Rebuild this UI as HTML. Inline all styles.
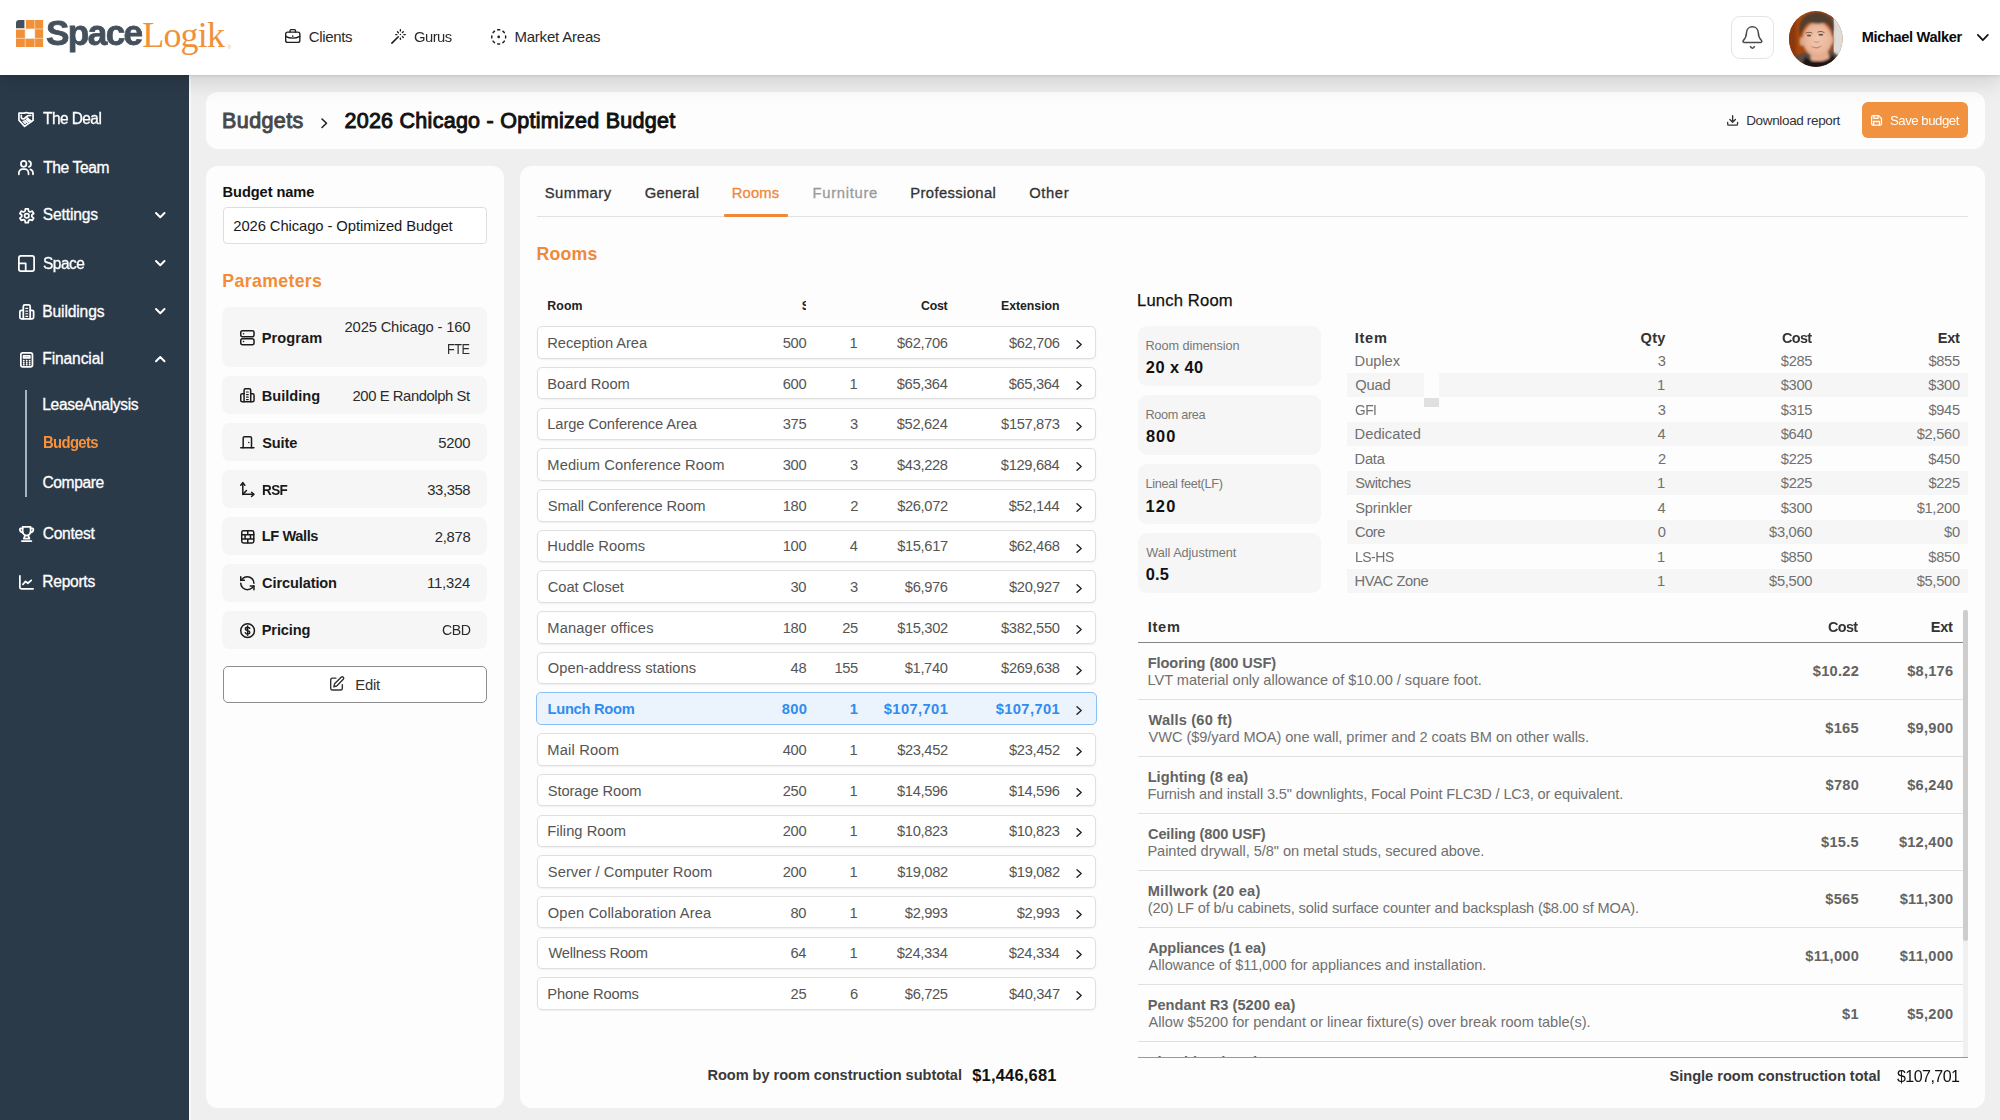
<!DOCTYPE html>
<html lang="en"><head><meta charset="utf-8"><title>SpaceLogik - Budgets</title>
<style>
*{box-sizing:border-box;margin:0;padding:0}
html,body{width:2000px;height:1120px;overflow:hidden}
body{background:#efefef;font-family:"Liberation Sans",sans-serif;color:#222;position:relative}
.abs{position:absolute}
.t{position:absolute;white-space:nowrap;line-height:1}
svg{position:absolute;overflow:visible}
.ic *{vector-effect:non-scaling-stroke}
#hdr{position:absolute;left:0;top:0;width:2000px;height:75px;background:#fff;box-shadow:0 1px 3px rgba(0,0,0,.1),0 8px 20px rgba(0,0,0,.12);z-index:5}
#side{position:absolute;left:0;top:75px;width:189px;height:1045px;background:#2b3a49;z-index:4}
.card{position:absolute;background:#fdfdfd;border-radius:12px}
.prm{position:absolute;left:222px;width:265px;background:#f6f6f6;border-radius:8px}
.row{position:absolute;left:536.8px;width:559.2px;height:32.4px;border:1px solid #dfdfdf;border-radius:5px;background:#fff;box-shadow:0 1px 2px rgba(0,0,0,.06)}
.row.sel{background:#ebf3fc;border:1.5px solid #8cbff7;left:536.3px;width:560.5px;height:32.7px;box-shadow:none}
.info{position:absolute;left:1138px;width:183px;height:60px;background:#f6f6f6;border-radius:9px}
</style></head>
<body>
<div id="hdr">
<svg style="left:16.3px;top:19.8px" width="27.1" height="27" viewBox="0 0 27.1 27" stroke="none"><rect x="0" y="8" width="27.1" height="19" fill="#f8c596"/><rect x="9" y="0" width="18.1" height="9" fill="#f8c596"/><path d="M3.2 0H8.65V8.4H0V3.2A3.2 3.2 0 0 1 3.2 0Z" fill="#44505c"/><g fill="#f0913a"><rect x="9.8" y="0" width="8.4" height="8.4"/><rect x="19.2" y="0" width="7.9" height="8.4"/><rect x="0" y="9.5" width="8.65" height="8.3"/><rect x="19.2" y="9.5" width="7.9" height="8.3"/><rect x="0" y="18.95" width="8.65" height="8.05"/><rect x="9.8" y="18.95" width="8.4" height="8.05"/><rect x="19.2" y="18.95" width="7.9" height="8.05"/></g><rect x="9.3" y="9" width="9.4" height="9.4" fill="#fff"/><rect x="8.65" y="0" width="1.15" height="9" fill="#fff"/><rect x="0" y="8.4" width="9" height="1.1" fill="#fff"/></svg>
<div class="t" style="left:45.85px;top:16px;font-size:35.5px;color:#44505c;letter-spacing:-1.6px;transform:scaleX(0.9893);transform-origin:0 0;font-weight:bold;-webkit-text-stroke:.8px #44505c;">Space</div>
<div class="t" style="left:142.32px;top:17px;font-size:36px;color:#f0913a;letter-spacing:-0.84px;font-family:'Liberation Serif',serif;">Logik</div>
<div class="t" style="left:227.5px;top:44.5px;font-size:5px;color:#e9b58c">&#174;</div>
<svg class="ic" style="left:284.9px;top:29px" width="15.5" height="14.1" viewBox="2.141 3.153 19.717 17.694" preserveAspectRatio="none" fill="none" stroke="#1e1e1e" stroke-width="1.35" stroke-linecap="round" stroke-linejoin="round"><rect x="3" y="7" width="18" height="13" rx="2.5"/><path d="M8.5 7V5.5A1.5 1.5 0 0 1 10 4h4a1.5 1.5 0 0 1 1.5 1.5V7"/><path d="M3 12.5c3 1.6 6 2.2 9 2.2s6-.6 9-2.2"/><path d="M12 12v.5"/></svg>
<div class="t" style="left:308.65px;top:29px;font-size:15px;color:#2a2a2a;letter-spacing:-0.32px;">Clients</div>
<svg style="left:391.1px;top:29px;color:#1e1e1e" width="15" height="15" viewBox="0 0 15 15" preserveAspectRatio="none" fill="none" stroke="#1e1e1e" stroke-width="1.4" stroke-linecap="round" stroke-linejoin="round"><path d="M.9 14.1 7.3 7.8" stroke-width="1.6"/><path d="M9.4 .7v1.2M9.4 9.1v1.2M4.7 5.6h1.2M12.9 5.6h1.4M6.5 2.8l.9.9M12.3 2.7l-.9.9M12.3 8.4l-.9-.8" stroke-width="1.4"/><circle cx="9.4" cy="5.6" r=".75" fill="currentColor" stroke="none"/></svg>
<div class="t" style="left:414.26px;top:29px;font-size:15px;color:#2a2a2a;letter-spacing:-0.54px;transform:scaleX(0.9882);transform-origin:0 0;">Gurus</div>
<svg style="left:490.7px;top:28.85px;color:#1e1e1e" width="15.4" height="15.8" viewBox="0 0 15.4 15.8" preserveAspectRatio="none" fill="none" stroke="#1e1e1e" stroke-width="1.45" stroke-linecap="round" stroke-linejoin="round"><ellipse cx="7.7" cy="7.9" rx="6.95" ry="7.15" stroke-width="1.45" stroke-dasharray="2.1 3.43" stroke-dashoffset="1.05" pathLength="44.24"/><circle cx="7.7" cy="7.95" r="1.35" fill="currentColor" stroke="none"/></svg>
<div class="t" style="left:514.4px;top:29px;font-size:15px;color:#2a2a2a;letter-spacing:-0.2px;">Market Areas</div>
<div class="abs" style="left:1731px;top:15.8px;width:42.8px;height:43px;border:1px solid #e4e4e4;border-radius:9px;background:#fff"></div>
<svg style="left:1742px;top:25.9px;color:#4a4a4a" width="21" height="23.4" viewBox="0 0 21 23.4" preserveAspectRatio="none" fill="none" stroke="#4a4a4a" stroke-width="1.5" stroke-linecap="round" stroke-linejoin="round"><path d="M10.4 .75C7 .75 4.6 3.3 4.5 6.8 4.4 10.5 4 12 1.3 14.6.6 15.3 1 16.4 2 16.4H18.8C19.8 16.4 20.2 15.3 19.5 14.6 16.8 12 16.4 10.5 16.3 6.8 16.2 3.3 13.8.75 10.4.75Z"/><path d="M8.5 20.6C9.3 22.8 11.6 22.8 12.4 20.6"/></svg>
<svg style="left:1789.3px;top:11px" width="53.6" height="56" viewBox="0 0 53.6 56" stroke="none"><defs><clipPath id="av"><ellipse cx="26.8" cy="28" rx="26.8" ry="28"/></clipPath><filter id="bl" x="-30%" y="-30%" width="160%" height="160%"><feGaussianBlur stdDeviation="1"/></filter><filter id="bs" x="-30%" y="-30%" width="160%" height="160%"><feGaussianBlur stdDeviation=".55"/></filter><radialGradient id="fc" cx=".52" cy=".5" r=".62"><stop offset="0" stop-color="#f3c8b0"/><stop offset=".65" stop-color="#eab699"/><stop offset="1" stop-color="#cf967a"/></radialGradient></defs><g clip-path="url(#av)"><rect width="54" height="56" fill="#a6470f"/><rect x="-2" y="0" width="9" height="56" fill="#8c390b" filter="url(#bl)"/><rect x="44" y="0" width="12" height="56" fill="#dedcd6"/><rect x="41" y="0" width="3.6" height="46" fill="#8b4c34" filter="url(#bs)"/><g filter="url(#bl)"><path d="M0 56 5 45 24 39 44 41 53 47 54 56Z" fill="#5b4a43"/><path d="M21 37H38L41 50H22Z" fill="#e6ae90"/><path d="M16.5 45.5C22 52.5 38 52 44 43.5L51 57H11Z" fill="#1a1414"/><ellipse cx="12.8" cy="30.5" rx="2.2" ry="4.6" fill="#dfa88c"/><ellipse cx="43.3" cy="29" rx="1.6" ry="4.2" fill="#d59a80"/><ellipse cx="28.3" cy="28.3" rx="15" ry="17.2" fill="url(#fc)"/><path d="M11.5 25C7.5 9 16 1.5 28 1.5 40 1.5 47 9 43.5 23 43 17 40 13 35.5 11.5 30 13.5 24 12.5 19.5 11.5 15.5 14 13 19 11.5 25Z" fill="#4f3d2f"/></g><g filter="url(#bs)"><path d="M16.5 22.3C18.5 21 21.5 21 23.5 22.2M28.5 21.3C30.5 20 33.5 20.2 35.5 21.8" stroke="#7a5b48" stroke-width="1" fill="none"/><ellipse cx="20" cy="24.5" rx="2.3" ry=".95" fill="#66564f"/><ellipse cx="31.8" cy="23.8" rx="2.5" ry=".95" fill="#66564f"/><path d="M25 30.3C26.5 31.6 29 31.6 30.5 30.3" stroke="#c48f74" stroke-width="1" fill="none"/><path d="M21.5 34.8C25 36.8 30.5 36.5 33.5 33.8 31.5 38.3 24.5 38.8 21.5 34.8Z" fill="#c58787"/></g></g></svg>
<div class="t" style="left:1861.65px;top:30px;font-size:14.6px;color:#0a0a0a;letter-spacing:-0.34px;font-weight:bold;">Michael Walker</div>
<svg class="ic" style="left:1976.9px;top:34.1px" width="11.7" height="7" viewBox="4.980 8.038 14.040 7.925" preserveAspectRatio="none" fill="none" stroke="#111" stroke-width="1.7" stroke-linecap="round" stroke-linejoin="round"><path d="m6 9 6 6 6-6"/></svg>
</div>
<div id="side"></div>
<div class="abs" style="left:189px;top:75px;width:2px;height:1045px;background:#f9f9f9;z-index:4"></div>
<div class="abs" style="left:0;top:0;width:189px;height:1120px;z-index:6">
<svg style="left:18.4px;top:112px;color:#fff" width="16" height="15.3" viewBox="0 0 16 15.3" preserveAspectRatio="none" fill="none" stroke="#fff" stroke-width="1.7" stroke-linecap="round" stroke-linejoin="round"><path d="M.95 1.2H5.8C7.4.35 9.2.35 10.8 1.2H15.05V8.4L6.6 14.4.95 8.2Z"/><path d="M3.3 3.4V5.1C3.4 7.1 5.7 7.5 6.9 6.1L8.1 4.8C9.1 3.7 10.5 3.4 12.7 3.4"/><path d="M8.9 5.7 13.5 9.5M5.3 9.4l1.9 1.9M7 8.4l2.2 2.2M8.8 7.4l2.3 2.3"/></svg>
<div class="t" style="left:43.19px;top:111px;font-size:15.6px;color:#fff;letter-spacing:-0.56px;transform:scaleX(0.9914);transform-origin:0 0;-webkit-text-stroke:.3px #fff;">The Deal</div>
<svg class="ic" style="left:18.4px;top:159.8px" width="15.85" height="15.2" viewBox="1.321 2.714 21.358 18.873" preserveAspectRatio="none" fill="none" stroke="#fff" stroke-width="1.75" stroke-linecap="round" stroke-linejoin="round"><circle cx="9" cy="7.5" r="3.7"/><path d="M2.5 20.5v-1.5a5 5 0 0 1 5-5h3a5 5 0 0 1 5 5v1.5"/><path d="M16 4a3.7 3.7 0 0 1 0 7.2"/><path d="M21.5 20.5v-1.5a5 5 0 0 0-3.5-4.7"/></svg>
<div class="t" style="left:43.19px;top:160px;font-size:15.6px;color:#fff;letter-spacing:-0.4px;-webkit-text-stroke:.3px #fff;">The Team</div>
<svg class="ic" style="left:18.6px;top:207.8px" width="15.6" height="15.6" viewBox="2.415 2.054 19.171 19.891" preserveAspectRatio="none" fill="none" stroke="#fff" stroke-width="1.75" stroke-linecap="round" stroke-linejoin="round"><path d="M10.28 3.17 L13.72 3.17 L14.26 6.12 L15.96 7.10 L18.79 6.10 L20.51 9.07 L18.22 11.01 L18.22 12.99 L20.51 14.93 L18.79 17.90 L15.96 16.90 L14.26 17.88 L13.72 20.83 L10.28 20.83 L9.74 17.88 L8.04 16.90 L5.21 17.90 L3.49 14.93 L5.78 12.99 L5.78 11.01 L3.49 9.07 L5.21 6.10 L8.04 7.10 L9.74 6.12Z"/><circle cx="12" cy="12" r="2.7"/></svg>
<div class="t" style="left:42.8px;top:207px;font-size:15.6px;color:#fff;letter-spacing:-0.16px;-webkit-text-stroke:.3px #fff;">Settings</div>
<svg style="left:154.75px;top:212px" width="10.5" height="6.25" viewBox="0 0 10.5 6.25" fill="none" stroke="#fff" stroke-width="2" stroke-linecap="round" stroke-linejoin="round"><path d="M1 1 5.25 5.25 9.5 1"/></svg>
<svg class="ic" style="left:17.75px;top:255px" width="17" height="16.9" viewBox="1.410 1.960 21.180 20.079" preserveAspectRatio="none" fill="none" stroke="#fff" stroke-width="1.75" stroke-linecap="round" stroke-linejoin="round"><rect x="2.5" y="3" width="19" height="18" rx="2.5"/><path d="M2.5 12h8.5v9"/></svg>
<div class="t" style="left:42.8px;top:256px;font-size:15.6px;color:#fff;letter-spacing:-0.56px;transform:scaleX(0.9962);transform-origin:0 0;-webkit-text-stroke:.3px #fff;">Space</div>
<svg style="left:154.75px;top:260.4px" width="10.5" height="6.25" viewBox="0 0 10.5 6.25" fill="none" stroke="#fff" stroke-width="2" stroke-linecap="round" stroke-linejoin="round"><path d="M1 1 5.25 5.25 9.5 1"/></svg>
<svg class="ic" style="left:18.5px;top:303.75px" width="15.5" height="15.65" viewBox="1.855 1.867 20.291 20.266" preserveAspectRatio="none" fill="none" stroke="#fff" stroke-width="1.75" stroke-linecap="round" stroke-linejoin="round"><path d="M7.5 21V5a2 2 0 0 1 2-2h5a2 2 0 0 1 2 2v16"/><path d="M7.5 10H5a2 2 0 0 0-2 2v7a2 2 0 0 0 2 2h14a2 2 0 0 0 2-2v-7a2 2 0 0 0-2-2h-2.5"/><path d="M10.8 7.5h2.4M10.8 11h2.4M10.8 14.5h2.4M10.8 18h2.4" stroke-width="1.2"/></svg>
<div class="t" style="left:42.25px;top:304px;font-size:15.6px;color:#fff;letter-spacing:-0.13px;-webkit-text-stroke:.3px #fff;">Buildings</div>
<svg style="left:154.75px;top:308.1px" width="10.5" height="6.25" viewBox="0 0 10.5 6.25" fill="none" stroke="#fff" stroke-width="2" stroke-linecap="round" stroke-linejoin="round"><path d="M1 1 5.25 5.25 9.5 1"/></svg>
<svg class="ic" style="left:19.75px;top:351.6px" width="13.35" height="15.65" viewBox="3.369 1.304 17.263 21.392" preserveAspectRatio="none" fill="none" stroke="#fff" stroke-width="1.75" stroke-linecap="round" stroke-linejoin="round"><rect x="4.5" y="2.5" width="15" height="19" rx="2.5"/><path d="M8 6.5h8v3H8z"/><path d="M8.2 13h.1M12 13h.1M15.8 13h.1M8.2 16h.1M12 16h.1M15.8 16h.1M8.2 18.6h.1M12 18.6h.1M15.8 18.6h.1"/></svg>
<div class="t" style="left:42.25px;top:351px;font-size:15.6px;color:#fff;letter-spacing:-0.12px;-webkit-text-stroke:.3px #fff;">Financial</div>
<svg style="left:154.75px;top:355.9px" width="10.5" height="6.25" viewBox="0 0 10.5 6.25" fill="none" stroke="#fff" stroke-width="2" stroke-linecap="round" stroke-linejoin="round"><path d="M1 5.25 5.25 1 9.5 5.25"/></svg>
<svg class="ic" style="left:18.75px;top:526px" width="15.25" height="15.9" viewBox="2.398 1.887 19.204 20.226" preserveAspectRatio="none" fill="none" stroke="#fff" stroke-width="1.75" stroke-linecap="round" stroke-linejoin="round"><path d="M7 3h10v6a5 5 0 0 1-10 0Z"/><path d="M7 5H4.5a1 1 0 0 0-1 1c0 2.5 1.5 4 3.8 4.2M17 5h2.5a1 1 0 0 1 1 1c0 2.5-1.5 4-3.8 4.2"/><path d="M10 14.2 8.5 18h7L14 14.2"/><path d="M6 21h12"/></svg>
<div class="t" style="left:42.72px;top:526px;font-size:15.6px;color:#fff;letter-spacing:-0.28px;-webkit-text-stroke:.3px #fff;">Contest</div>
<svg class="ic" style="left:18.75px;top:574.75px" width="15" height="14.65" viewBox="2.344 1.813 19.811 19.874" preserveAspectRatio="none" fill="none" stroke="#fff" stroke-width="1.75" stroke-linecap="round" stroke-linejoin="round"><path d="M3.5 3v15.5a2 2 0 0 0 2 2H21"/><path d="m7.5 14.5 3.5-4 3 2.5 4.5-4"/></svg>
<div class="t" style="left:42.25px;top:574px;font-size:15.6px;color:#fff;letter-spacing:-0.27px;-webkit-text-stroke:.3px #fff;">Reports</div>
<div class="abs" style="left:24.8px;top:389.7px;width:2.2px;height:107.5px;background:#aab2bb"></div>
<div class="t" style="left:42.25px;top:397px;font-size:15.6px;color:#fff;letter-spacing:-0.35px;-webkit-text-stroke:.3px #fff;">LeaseAnalysis</div>
<div class="t" style="left:42.53px;top:435px;font-size:15.6px;color:#f7923a;letter-spacing:-0.7px;transform:scaleX(0.9549);transform-origin:0 0;font-weight:bold;">Budgets</div>
<div class="t" style="left:42.52px;top:475px;font-size:15.6px;color:#fff;letter-spacing:-0.42px;-webkit-text-stroke:.3px #fff;">Compare</div>
</div>
<div class="card" style="left:205.5px;top:91.8px;width:1779.2px;height:57.1px"></div>
<div class="t" style="left:222.08px;top:111px;font-size:21.5px;color:#484848;letter-spacing:0.38px;-webkit-text-stroke:.95px #484848;">Budgets</div>
<svg style="left:320.5px;top:117.5px" width="6.5" height="10.5" viewBox="0 0 6.5 10.5" fill="none" stroke="#222" stroke-width="1.6" stroke-linecap="round" stroke-linejoin="round"><path d="M1 1 5.5 5.25 1 9.5"/></svg>
<div class="t" style="left:344.43px;top:111px;font-size:21.5px;color:#111;letter-spacing:0.27px;-webkit-text-stroke:.95px #111;">2026 Chicago - Optimized Budget</div>
<svg class="ic" style="left:1727px;top:115px" width="11.25" height="10.8" viewBox="2.909 2.857 18.182 18.286" preserveAspectRatio="none" fill="none" stroke="#333" stroke-width="1.35" stroke-linecap="round" stroke-linejoin="round"><path d="M12 4v11M7.5 10.5 12 15l4.5-4.5"/><path d="M4 15.5V18a2 2 0 0 0 2 2h12a2 2 0 0 0 2-2v-2.5"/></svg>
<div class="t" style="left:1746.22px;top:114px;font-size:13.5px;color:#333;letter-spacing:-0.35px;">Download report</div>
<div class="abs" style="left:1862px;top:102.2px;width:106px;height:36px;background:#f0923f;border-radius:6px"></div>
<svg class="ic" style="left:1870.7px;top:115px" width="11.1" height="10.8" viewBox="2.372 2.337 19.255 19.326" preserveAspectRatio="none" fill="none" stroke="#fff" stroke-width="1.3" stroke-linecap="round" stroke-linejoin="round"><path d="M6 3.5h9.5L20.5 8.5V18a2.5 2.5 0 0 1-2.5 2.5H6A2.5 2.5 0 0 1 3.5 18V6A2.5 2.5 0 0 1 6 3.5Z"/><path d="M7.5 3.5v5h7v-5M7 20.5v-6.5h10v6.5"/></svg>
<div class="t" style="left:1890.21px;top:114px;font-size:13.5px;color:#fff;letter-spacing:-0.49px;transform:scaleX(0.9777);transform-origin:0 0;">Save budget</div>
<div class="card" style="left:206px;top:165.6px;width:297.6px;height:942.8px"></div>
<div class="t" style="left:222.55px;top:185px;font-size:14.6px;color:#111;letter-spacing:-0.06px;font-weight:bold;">Budget name</div>
<div class="abs" style="left:222.5px;top:206.5px;width:264px;height:37px;border:1px solid #dedede;border-radius:4px;background:#fff"></div>
<div class="t" style="left:233.26px;top:219px;font-size:14.8px;color:#1a1a1a;letter-spacing:-0.09px;">2026 Chicago - Optimized Budget</div>
<div class="t" style="left:222.35px;top:273px;font-size:17.7px;color:#f28c38;letter-spacing:0.36px;font-weight:bold;">Parameters</div>
<div class="prm" style="top:307.3px;height:59.9px"></div>
<svg class="ic" style="left:240px;top:330px" width="14.8" height="15.4" viewBox="1.429 2.556 21.143 19.388" preserveAspectRatio="none" fill="none" stroke="#1c1c1c" stroke-width="1.5" stroke-linecap="round" stroke-linejoin="round"><rect x="2.5" y="3.5" width="19" height="7.5" rx="2.5"/><rect x="2.5" y="13.5" width="19" height="7.5" rx="2.5"/><path d="M6.5 7.2h.1M6.5 17.2h.1"/></svg>
<div class="t" style="left:261.75px;top:331px;font-size:14.6px;color:#1a1a1a;letter-spacing:0.06px;font-weight:bold;">Program</div>
<div class="prm" style="top:376px;height:38.4px"></div>
<svg class="ic" style="left:240px;top:388.2px" width="14.8" height="14.5" viewBox="1.985 1.962 20.030 20.077" preserveAspectRatio="none" fill="none" stroke="#1c1c1c" stroke-width="1.5" stroke-linecap="round" stroke-linejoin="round"><path d="M7.5 21V5a2 2 0 0 1 2-2h5a2 2 0 0 1 2 2v16"/><path d="M7.5 10H5a2 2 0 0 0-2 2v7a2 2 0 0 0 2 2h14a2 2 0 0 0 2-2v-7a2 2 0 0 0-2-2h-2.5"/><path d="M10.8 7.5h2.4M10.8 11h2.4M10.8 14.5h2.4M10.8 18h2.4" stroke-width="1.2"/></svg>
<div class="t" style="left:261.75px;top:389px;font-size:14.6px;color:#1a1a1a;font-weight:bold;">Building</div>
<div class="t" style="left:352.56px;top:389px;font-size:14.8px;color:#2b2b2b;letter-spacing:-0.42px;">200 E Randolph St</div>
<div class="prm" style="top:423.3px;height:37.9px"></div>
<svg class="ic" style="left:240.1px;top:436.3px" width="14.7" height="12.45" viewBox="1.420 2.336 21.159 19.329" preserveAspectRatio="none" fill="none" stroke="#1c1c1c" stroke-width="1.5" stroke-linecap="round" stroke-linejoin="round"><path d="M2.5 20.5h19"/><path d="M6 20.5V5.5a2 2 0 0 1 2-2h8a2 2 0 0 1 2 2v15"/><path d="M14 12.5v.1"/></svg>
<div class="t" style="left:262.26px;top:436px;font-size:14.6px;color:#1a1a1a;letter-spacing:-0.16px;font-weight:bold;">Suite</div>
<div class="t" style="left:438.31px;top:436px;font-size:14.8px;color:#2b2b2b;letter-spacing:-0.24px;">5200</div>
<div class="prm" style="top:470.2px;height:38.1px"></div>
<svg class="ic" style="left:239.9px;top:481.8px" width="14.5" height="15.3" viewBox="0.904 1.967 21.192 21.065" preserveAspectRatio="none" fill="none" stroke="#1c1c1c" stroke-width="1.5" stroke-linecap="round" stroke-linejoin="round"><path d="M5 3v16h16"/><path d="m5 19 5.3-5.3"/><path d="m2 6.3 3-3.3 3 3.3"/><path d="m17.8 16 3.2 3-3.2 3"/></svg>
<div class="t" style="left:261.82px;top:483px;font-size:14.6px;color:#1a1a1a;letter-spacing:-0.66px;transform:scaleX(0.9271);transform-origin:0 0;font-weight:bold;">RSF</div>
<div class="t" style="left:427.28px;top:483px;font-size:14.8px;color:#2b2b2b;letter-spacing:-0.4px;">33,358</div>
<div class="prm" style="top:517.4px;height:37.5px"></div>
<svg class="ic" style="left:240.7px;top:529.6px" width="13.55" height="13.8" viewBox="1.880 1.902 20.241 20.195" preserveAspectRatio="none" fill="none" stroke="#1c1c1c" stroke-width="1.5" stroke-linecap="round" stroke-linejoin="round"><rect x="3" y="3" width="18" height="18" rx="2.5"/><path d="M3 9h18M3 15h18M12 3v6M8 9v6M16 9v6M12 15v6"/></svg>
<div class="t" style="left:261.75px;top:529px;font-size:14.6px;color:#1a1a1a;letter-spacing:-0.39px;font-weight:bold;">LF Walls</div>
<div class="t" style="left:434.86px;top:530px;font-size:14.8px;color:#2b2b2b;letter-spacing:-0.32px;">2,878</div>
<div class="prm" style="top:564.2px;height:37.6px"></div>
<svg class="ic" style="left:240px;top:575.8px" width="14.7" height="14.4" viewBox="1.977 1.953 20.045 20.093" preserveAspectRatio="none" fill="none" stroke="#1c1c1c" stroke-width="1.5" stroke-linecap="round" stroke-linejoin="round"><path d="M21 12a9 9 0 0 0-9-9 9.75 9.75 0 0 0-6.74 2.74L3 8"/><path d="M3 3v5h5"/><path d="M3 12a9 9 0 0 0 9 9 9.75 9.75 0 0 0 6.74-2.74L21 16"/><path d="M16 16h5v5"/></svg>
<div class="t" style="left:262.12px;top:576px;font-size:14.6px;color:#1a1a1a;letter-spacing:-0.13px;font-weight:bold;">Circulation</div>
<div class="t" style="left:426.99px;top:576px;font-size:14.8px;color:#2b2b2b;letter-spacing:-0.16px;">11,324</div>
<div class="prm" style="top:611.2px;height:37.7px"></div>
<svg class="ic" style="left:239.6px;top:623.1px" width="15.2" height="15.3" viewBox="1.460 1.467 21.080 21.065" preserveAspectRatio="none" fill="none" stroke="#1c1c1c" stroke-width="1.5" stroke-linecap="round" stroke-linejoin="round"><circle cx="12" cy="12" r="9.5"/><path d="M15 8.8c-.5-1-1.6-1.5-3-1.5-1.8 0-3 .9-3 2.3 0 3 6 1.6 6 4.7 0 1.4-1.3 2.4-3 2.4-1.6 0-2.7-.7-3.2-1.8M12 5.5v13"/></svg>
<div class="t" style="left:261.75px;top:623px;font-size:14.6px;color:#1a1a1a;letter-spacing:-0.12px;font-weight:bold;">Pricing</div>
<div class="t" style="left:441.79px;top:623px;font-size:14.8px;color:#2b2b2b;letter-spacing:-0.53px;transform:scaleX(0.9563);transform-origin:0 0;">CBD</div>
<div class="t" style="left:344.56px;top:320px;font-size:14.8px;color:#2b2b2b;letter-spacing:-0.19px;">2025 Chicago - 160</div>
<div class="t" style="left:447.48px;top:342px;font-size:14.8px;color:#2b2b2b;letter-spacing:-0.53px;transform:scaleX(0.8581);transform-origin:0 0;">FTE</div>
<div class="abs" style="left:222.5px;top:666px;width:264px;height:37px;border:1px solid #8d8d8d;border-radius:5px;background:#fff"></div>
<svg class="ic" style="left:330.1px;top:676.3px" width="14.4" height="14.7" viewBox="2.508 1.110 20.404 20.359" preserveAspectRatio="none" fill="none" stroke="#333" stroke-width="1.4" stroke-linecap="round" stroke-linejoin="round"><path d="M11 4H6a2.5 2.5 0 0 0-2.5 2.5v11.5A2.5 2.5 0 0 0 6 20.5h11.5a2.5 2.5 0 0 0 2.5-2.5v-5"/><path d="M18.3 2.7a2.1 2.1 0 0 1 3 3L12 15l-4 1 1-4Z"/></svg>
<div class="t" style="left:355.22px;top:678px;font-size:14.8px;color:#333;letter-spacing:-0.2px;">Edit</div>
<div class="card" style="left:519.8px;top:165.6px;width:1464.9px;height:942.8px"></div>
<div class="t" style="left:544.73px;top:186px;font-size:14.8px;color:#333;letter-spacing:0.52px;-webkit-text-stroke:.3px currentColor;">Summary</div>
<div class="t" style="left:644.66px;top:186px;font-size:14.8px;color:#333;letter-spacing:0.28px;-webkit-text-stroke:.3px currentColor;">General</div>
<div class="t" style="left:731.82px;top:186px;font-size:14.8px;color:#f0883a;letter-spacing:0.12px;-webkit-text-stroke:.3px currentColor;">Rooms</div>
<div class="t" style="left:812.52px;top:186px;font-size:14.8px;color:#9a9a9a;letter-spacing:0.7px;-webkit-text-stroke:.3px currentColor;">Furniture</div>
<div class="t" style="left:910.22px;top:186px;font-size:14.8px;color:#333;letter-spacing:0.38px;-webkit-text-stroke:.3px currentColor;">Professional</div>
<div class="t" style="left:1029.13px;top:186px;font-size:14.8px;color:#333;letter-spacing:0.63px;-webkit-text-stroke:.3px currentColor;">Other</div>
<div class="abs" style="left:537px;top:216.3px;width:1431px;height:1.2px;background:#e2e2e2"></div>
<div class="abs" style="left:723.8px;top:214.2px;width:64.2px;height:2.7px;background:#f0883a;border-radius:1px"></div>
<div class="t" style="left:536.45px;top:246px;font-size:17.7px;color:#f0883a;letter-spacing:0.21px;font-weight:bold;">Rooms</div>
<div class="t" style="left:547.2px;top:300px;font-size:12.3px;color:#222;letter-spacing:0.16px;font-weight:bold;">Room</div>
<div class="abs" style="left:790px;top:296px;width:16.2px;height:20px;overflow:hidden"><div class="t" style="left:11.7px;top:3.9px;font-size:12.3px;font-weight:bold;color:#222">SF</div></div>
<div class="t" style="left:921.01px;top:300px;font-size:12.3px;color:#222;letter-spacing:-0.23px;font-weight:bold;">Cost</div>
<div class="t" style="left:1001px;top:300px;font-size:12.3px;color:#222;letter-spacing:-0.03px;font-weight:bold;">Extension</div>
<div class="row" style="top:326.4px"></div>
<div class="t" style="left:547.32px;top:336px;font-size:14.7px;color:#555;letter-spacing:-0.05px;">Reception Area</div>
<div class="t" style="left:782.72px;top:336px;font-size:14.7px;color:#555;letter-spacing:-0.34px;">500</div>
<div class="t" style="left:849.4px;top:336px;font-size:14.7px;color:#555;letter-spacing:-0.34px;">1</div>
<div class="t" style="left:896.99px;top:336px;font-size:14.7px;color:#555;letter-spacing:-0.34px;">$62,706</div>
<div class="t" style="left:1008.89px;top:336px;font-size:14.7px;color:#555;letter-spacing:-0.34px;">$62,706</div>
<svg style="left:1075.6px;top:340.2px" width="6.2" height="9" viewBox="0 0 6.2 9" fill="none" stroke="#222" stroke-width="1.4" stroke-linecap="round" stroke-linejoin="round"><path d="M1 .8 5.2 4.5 1 8.2"/></svg>
<div class="row" style="top:367.08px"></div>
<div class="t" style="left:547.32px;top:377px;font-size:14.7px;color:#555;letter-spacing:0.01px;">Board Room</div>
<div class="t" style="left:782.72px;top:377px;font-size:14.7px;color:#555;letter-spacing:-0.34px;">600</div>
<div class="t" style="left:849.4px;top:377px;font-size:14.7px;color:#555;letter-spacing:-0.34px;">1</div>
<div class="t" style="left:896.77px;top:377px;font-size:14.7px;color:#555;letter-spacing:-0.34px;">$65,364</div>
<div class="t" style="left:1008.67px;top:377px;font-size:14.7px;color:#555;letter-spacing:-0.34px;">$65,364</div>
<svg style="left:1075.6px;top:380.88px" width="6.2" height="9" viewBox="0 0 6.2 9" fill="none" stroke="#222" stroke-width="1.4" stroke-linecap="round" stroke-linejoin="round"><path d="M1 .8 5.2 4.5 1 8.2"/></svg>
<div class="row" style="top:407.76px"></div>
<div class="t" style="left:547.32px;top:417px;font-size:14.7px;color:#555;letter-spacing:-0.11px;">Large Conference Area</div>
<div class="t" style="left:782.79px;top:417px;font-size:14.7px;color:#555;letter-spacing:-0.34px;">375</div>
<div class="t" style="left:850.03px;top:417px;font-size:14.7px;color:#555;letter-spacing:-0.34px;">3</div>
<div class="t" style="left:896.77px;top:417px;font-size:14.7px;color:#555;letter-spacing:-0.34px;">$52,624</div>
<div class="t" style="left:1001.07px;top:417px;font-size:14.7px;color:#555;letter-spacing:-0.34px;">$157,873</div>
<svg style="left:1075.6px;top:421.56px" width="6.2" height="9" viewBox="0 0 6.2 9" fill="none" stroke="#222" stroke-width="1.4" stroke-linecap="round" stroke-linejoin="round"><path d="M1 .8 5.2 4.5 1 8.2"/></svg>
<div class="row" style="top:448.44px"></div>
<div class="t" style="left:547.32px;top:458px;font-size:14.7px;color:#555;letter-spacing:0.08px;">Medium Conference Room</div>
<div class="t" style="left:782.72px;top:458px;font-size:14.7px;color:#555;letter-spacing:-0.34px;">300</div>
<div class="t" style="left:850.03px;top:458px;font-size:14.7px;color:#555;letter-spacing:-0.34px;">3</div>
<div class="t" style="left:896.99px;top:458px;font-size:14.7px;color:#555;letter-spacing:-0.34px;">$43,228</div>
<div class="t" style="left:1000.85px;top:458px;font-size:14.7px;color:#555;letter-spacing:-0.34px;">$129,684</div>
<svg style="left:1075.6px;top:462.24px" width="6.2" height="9" viewBox="0 0 6.2 9" fill="none" stroke="#222" stroke-width="1.4" stroke-linecap="round" stroke-linejoin="round"><path d="M1 .8 5.2 4.5 1 8.2"/></svg>
<div class="row" style="top:489.12px"></div>
<div class="t" style="left:547.84px;top:499px;font-size:14.7px;color:#555;letter-spacing:-0.12px;">Small Conference Room</div>
<div class="t" style="left:782.72px;top:499px;font-size:14.7px;color:#555;letter-spacing:-0.34px;">180</div>
<div class="t" style="left:850.18px;top:499px;font-size:14.7px;color:#555;letter-spacing:-0.34px;">2</div>
<div class="t" style="left:897.13px;top:499px;font-size:14.7px;color:#555;letter-spacing:-0.34px;">$26,072</div>
<div class="t" style="left:1008.67px;top:499px;font-size:14.7px;color:#555;letter-spacing:-0.34px;">$52,144</div>
<svg style="left:1075.6px;top:502.92px" width="6.2" height="9" viewBox="0 0 6.2 9" fill="none" stroke="#222" stroke-width="1.4" stroke-linecap="round" stroke-linejoin="round"><path d="M1 .8 5.2 4.5 1 8.2"/></svg>
<div class="row" style="top:529.8px"></div>
<div class="t" style="left:547.32px;top:539px;font-size:14.7px;color:#555;letter-spacing:0.06px;">Huddle Rooms</div>
<div class="t" style="left:782.72px;top:539px;font-size:14.7px;color:#555;letter-spacing:-0.34px;">100</div>
<div class="t" style="left:849.81px;top:539px;font-size:14.7px;color:#555;letter-spacing:-0.34px;">4</div>
<div class="t" style="left:897.13px;top:539px;font-size:14.7px;color:#555;letter-spacing:-0.34px;">$15,617</div>
<div class="t" style="left:1008.89px;top:539px;font-size:14.7px;color:#555;letter-spacing:-0.34px;">$62,468</div>
<svg style="left:1075.6px;top:543.6px" width="6.2" height="9" viewBox="0 0 6.2 9" fill="none" stroke="#222" stroke-width="1.4" stroke-linecap="round" stroke-linejoin="round"><path d="M1 .8 5.2 4.5 1 8.2"/></svg>
<div class="row" style="top:570.48px"></div>
<div class="t" style="left:547.76px;top:580px;font-size:14.7px;color:#555;letter-spacing:-0.06px;">Coat Closet</div>
<div class="t" style="left:790.54px;top:580px;font-size:14.7px;color:#555;letter-spacing:-0.34px;">30</div>
<div class="t" style="left:850.03px;top:580px;font-size:14.7px;color:#555;letter-spacing:-0.34px;">3</div>
<div class="t" style="left:904.81px;top:580px;font-size:14.7px;color:#555;letter-spacing:-0.34px;">$6,976</div>
<div class="t" style="left:1009.03px;top:580px;font-size:14.7px;color:#555;letter-spacing:-0.34px;">$20,927</div>
<svg style="left:1075.6px;top:584.28px" width="6.2" height="9" viewBox="0 0 6.2 9" fill="none" stroke="#222" stroke-width="1.4" stroke-linecap="round" stroke-linejoin="round"><path d="M1 .8 5.2 4.5 1 8.2"/></svg>
<div class="row" style="top:611.16px"></div>
<div class="t" style="left:547.32px;top:621px;font-size:14.7px;color:#555;letter-spacing:0.14px;">Manager offices</div>
<div class="t" style="left:782.72px;top:621px;font-size:14.7px;color:#555;letter-spacing:-0.34px;">180</div>
<div class="t" style="left:842.21px;top:621px;font-size:14.7px;color:#555;letter-spacing:-0.34px;">25</div>
<div class="t" style="left:897.13px;top:621px;font-size:14.7px;color:#555;letter-spacing:-0.34px;">$15,302</div>
<div class="t" style="left:1001px;top:621px;font-size:14.7px;color:#555;letter-spacing:-0.34px;">$382,550</div>
<svg style="left:1075.6px;top:624.96px" width="6.2" height="9" viewBox="0 0 6.2 9" fill="none" stroke="#222" stroke-width="1.4" stroke-linecap="round" stroke-linejoin="round"><path d="M1 .8 5.2 4.5 1 8.2"/></svg>
<div class="row" style="top:651.84px"></div>
<div class="t" style="left:547.84px;top:661px;font-size:14.7px;color:#555;letter-spacing:0.02px;">Open-address stations</div>
<div class="t" style="left:790.61px;top:661px;font-size:14.7px;color:#555;letter-spacing:-0.34px;">48</div>
<div class="t" style="left:834.39px;top:661px;font-size:14.7px;color:#555;letter-spacing:-0.34px;">155</div>
<div class="t" style="left:904.73px;top:661px;font-size:14.7px;color:#555;letter-spacing:-0.34px;">$1,740</div>
<div class="t" style="left:1001.07px;top:661px;font-size:14.7px;color:#555;letter-spacing:-0.34px;">$269,638</div>
<svg style="left:1075.6px;top:665.64px" width="6.2" height="9" viewBox="0 0 6.2 9" fill="none" stroke="#222" stroke-width="1.4" stroke-linecap="round" stroke-linejoin="round"><path d="M1 .8 5.2 4.5 1 8.2"/></svg>
<div class="row sel" style="top:692.07px"></div>
<div class="t" style="left:547.54px;top:702px;font-size:14.7px;color:#2f8cf0;letter-spacing:-0.28px;font-weight:bold;">Lunch Room</div>
<div class="t" style="left:781.71px;top:702px;font-size:14.7px;color:#2f8cf0;letter-spacing:0.4px;font-weight:bold;">800</div>
<div class="t" style="left:849.71px;top:702px;font-size:14.7px;color:#2f8cf0;letter-spacing:0.4px;font-weight:bold;">1</div>
<div class="t" style="left:883.77px;top:702px;font-size:14.7px;color:#2f8cf0;letter-spacing:0.4px;font-weight:bold;">$107,701</div>
<div class="t" style="left:995.67px;top:702px;font-size:14.7px;color:#2f8cf0;letter-spacing:0.4px;font-weight:bold;">$107,701</div>
<svg style="left:1075.6px;top:706.32px" width="6.2" height="9" viewBox="0 0 6.2 9" fill="none" stroke="#222" stroke-width="1.4" stroke-linecap="round" stroke-linejoin="round"><path d="M1 .8 5.2 4.5 1 8.2"/></svg>
<div class="row" style="top:733.2px"></div>
<div class="t" style="left:547.32px;top:743px;font-size:14.7px;color:#555;letter-spacing:0.18px;">Mail Room</div>
<div class="t" style="left:782.72px;top:743px;font-size:14.7px;color:#555;letter-spacing:-0.34px;">400</div>
<div class="t" style="left:849.4px;top:743px;font-size:14.7px;color:#555;letter-spacing:-0.34px;">1</div>
<div class="t" style="left:897.13px;top:743px;font-size:14.7px;color:#555;letter-spacing:-0.34px;">$23,452</div>
<div class="t" style="left:1009.03px;top:743px;font-size:14.7px;color:#555;letter-spacing:-0.34px;">$23,452</div>
<svg style="left:1075.6px;top:747px" width="6.2" height="9" viewBox="0 0 6.2 9" fill="none" stroke="#222" stroke-width="1.4" stroke-linecap="round" stroke-linejoin="round"><path d="M1 .8 5.2 4.5 1 8.2"/></svg>
<div class="row" style="top:773.88px"></div>
<div class="t" style="left:547.84px;top:784px;font-size:14.7px;color:#555;letter-spacing:-0.1px;">Storage Room</div>
<div class="t" style="left:782.72px;top:784px;font-size:14.7px;color:#555;letter-spacing:-0.34px;">250</div>
<div class="t" style="left:849.4px;top:784px;font-size:14.7px;color:#555;letter-spacing:-0.34px;">1</div>
<div class="t" style="left:896.99px;top:784px;font-size:14.7px;color:#555;letter-spacing:-0.34px;">$14,596</div>
<div class="t" style="left:1008.89px;top:784px;font-size:14.7px;color:#555;letter-spacing:-0.34px;">$14,596</div>
<svg style="left:1075.6px;top:787.68px" width="6.2" height="9" viewBox="0 0 6.2 9" fill="none" stroke="#222" stroke-width="1.4" stroke-linecap="round" stroke-linejoin="round"><path d="M1 .8 5.2 4.5 1 8.2"/></svg>
<div class="row" style="top:814.56px"></div>
<div class="t" style="left:547.32px;top:824px;font-size:14.7px;color:#555;letter-spacing:0.02px;">Filing Room</div>
<div class="t" style="left:782.72px;top:824px;font-size:14.7px;color:#555;letter-spacing:-0.34px;">200</div>
<div class="t" style="left:849.4px;top:824px;font-size:14.7px;color:#555;letter-spacing:-0.34px;">1</div>
<div class="t" style="left:896.99px;top:824px;font-size:14.7px;color:#555;letter-spacing:-0.34px;">$10,823</div>
<div class="t" style="left:1008.89px;top:824px;font-size:14.7px;color:#555;letter-spacing:-0.34px;">$10,823</div>
<svg style="left:1075.6px;top:828.36px" width="6.2" height="9" viewBox="0 0 6.2 9" fill="none" stroke="#222" stroke-width="1.4" stroke-linecap="round" stroke-linejoin="round"><path d="M1 .8 5.2 4.5 1 8.2"/></svg>
<div class="row" style="top:855.24px"></div>
<div class="t" style="left:547.84px;top:865px;font-size:14.7px;color:#555;letter-spacing:0.05px;">Server / Computer Room</div>
<div class="t" style="left:782.72px;top:865px;font-size:14.7px;color:#555;letter-spacing:-0.34px;">200</div>
<div class="t" style="left:849.4px;top:865px;font-size:14.7px;color:#555;letter-spacing:-0.34px;">1</div>
<div class="t" style="left:897.13px;top:865px;font-size:14.7px;color:#555;letter-spacing:-0.34px;">$19,082</div>
<div class="t" style="left:1009.03px;top:865px;font-size:14.7px;color:#555;letter-spacing:-0.34px;">$19,082</div>
<svg style="left:1075.6px;top:869.04px" width="6.2" height="9" viewBox="0 0 6.2 9" fill="none" stroke="#222" stroke-width="1.4" stroke-linecap="round" stroke-linejoin="round"><path d="M1 .8 5.2 4.5 1 8.2"/></svg>
<div class="row" style="top:895.92px"></div>
<div class="t" style="left:547.84px;top:906px;font-size:14.7px;color:#555;letter-spacing:0.11px;">Open Collaboration Area</div>
<div class="t" style="left:790.54px;top:906px;font-size:14.7px;color:#555;letter-spacing:-0.34px;">80</div>
<div class="t" style="left:849.4px;top:906px;font-size:14.7px;color:#555;letter-spacing:-0.34px;">1</div>
<div class="t" style="left:904.81px;top:906px;font-size:14.7px;color:#555;letter-spacing:-0.34px;">$2,993</div>
<div class="t" style="left:1016.71px;top:906px;font-size:14.7px;color:#555;letter-spacing:-0.34px;">$2,993</div>
<svg style="left:1075.6px;top:909.72px" width="6.2" height="9" viewBox="0 0 6.2 9" fill="none" stroke="#222" stroke-width="1.4" stroke-linecap="round" stroke-linejoin="round"><path d="M1 .8 5.2 4.5 1 8.2"/></svg>
<div class="row" style="top:936.6px"></div>
<div class="t" style="left:548.43px;top:946px;font-size:14.7px;color:#555;letter-spacing:-0.25px;">Wellness Room</div>
<div class="t" style="left:790.39px;top:946px;font-size:14.7px;color:#555;letter-spacing:-0.34px;">64</div>
<div class="t" style="left:849.4px;top:946px;font-size:14.7px;color:#555;letter-spacing:-0.34px;">1</div>
<div class="t" style="left:896.77px;top:946px;font-size:14.7px;color:#555;letter-spacing:-0.34px;">$24,334</div>
<div class="t" style="left:1008.67px;top:946px;font-size:14.7px;color:#555;letter-spacing:-0.34px;">$24,334</div>
<svg style="left:1075.6px;top:950.4px" width="6.2" height="9" viewBox="0 0 6.2 9" fill="none" stroke="#222" stroke-width="1.4" stroke-linecap="round" stroke-linejoin="round"><path d="M1 .8 5.2 4.5 1 8.2"/></svg>
<div class="row" style="top:977.28px"></div>
<div class="t" style="left:547.32px;top:987px;font-size:14.7px;color:#555;letter-spacing:-0.15px;">Phone Rooms</div>
<div class="t" style="left:790.61px;top:987px;font-size:14.7px;color:#555;letter-spacing:-0.34px;">25</div>
<div class="t" style="left:850.03px;top:987px;font-size:14.7px;color:#555;letter-spacing:-0.34px;">6</div>
<div class="t" style="left:904.81px;top:987px;font-size:14.7px;color:#555;letter-spacing:-0.34px;">$6,725</div>
<div class="t" style="left:1009.03px;top:987px;font-size:14.7px;color:#555;letter-spacing:-0.34px;">$40,347</div>
<svg style="left:1075.6px;top:991.08px" width="6.2" height="9" viewBox="0 0 6.2 9" fill="none" stroke="#222" stroke-width="1.4" stroke-linecap="round" stroke-linejoin="round"><path d="M1 .8 5.2 4.5 1 8.2"/></svg>
<div class="t" style="left:707.45px;top:1068px;font-size:14.6px;color:#3a3a3a;letter-spacing:-0.05px;font-weight:bold;">Room by room construction subtotal</div>
<div class="t" style="left:972.15px;top:1067px;font-size:16.5px;color:#111;letter-spacing:0.2px;font-weight:bold;">$1,446,681</div>
<div class="t" style="left:1137.07px;top:293px;font-size:16.6px;color:#111;letter-spacing:0.16px;-webkit-text-stroke:.25px #111;">Lunch Room</div>
<div class="info" style="top:326px;height:60px"></div>
<div class="t" style="left:1145.38px;top:340px;font-size:12.7px;color:#777;letter-spacing:-0.07px;">Room dimension</div>
<div class="t" style="left:1145.83px;top:359px;font-size:16.4px;color:#111;letter-spacing:0.44px;font-weight:bold;">20 x 40</div>
<div class="info" style="top:395px;height:60px"></div>
<div class="t" style="left:1145.38px;top:409px;font-size:12.7px;color:#777;letter-spacing:-0.32px;">Room area</div>
<div class="t" style="left:1145.91px;top:428px;font-size:16.4px;color:#111;letter-spacing:1.07px;font-weight:bold;">800</div>
<div class="info" style="top:464.3px;height:59.3px"></div>
<div class="t" style="left:1145.38px;top:478px;font-size:12.7px;color:#777;letter-spacing:-0.3px;">Lineal feet(LF)</div>
<div class="t" style="left:1145.42px;top:498px;font-size:16.4px;color:#111;letter-spacing:1.32px;font-weight:bold;">120</div>
<div class="info" style="top:533px;height:59.8px"></div>
<div class="t" style="left:1146.34px;top:547px;font-size:12.7px;color:#777;letter-spacing:-0.04px;">Wall Adjustment</div>
<div class="t" style="left:1145.74px;top:566px;font-size:16.4px;color:#111;letter-spacing:0.23px;font-weight:bold;">0.5</div>
<div class="t" style="left:1354.65px;top:331px;font-size:14.6px;color:#333;letter-spacing:0.74px;font-weight:bold;">Item</div>
<div class="t" style="left:1640.42px;top:331px;font-size:14.6px;color:#333;letter-spacing:0.37px;font-weight:bold;">Qty</div>
<div class="t" style="left:1782.02px;top:331px;font-size:14.6px;color:#333;letter-spacing:-0.66px;transform:scaleX(0.9895);transform-origin:0 0;font-weight:bold;">Cost</div>
<div class="t" style="left:1937.75px;top:331px;font-size:14.6px;color:#333;letter-spacing:-0.35px;font-weight:bold;">Ext</div>
<div class="t" style="left:1354.62px;top:354px;font-size:14.7px;color:#707070;letter-spacing:-0.05px;">Duplex</div>
<div class="t" style="left:1657.73px;top:354px;font-size:14.7px;color:#707070;letter-spacing:-0.3px;">3</div>
<div class="t" style="left:1780.78px;top:354px;font-size:14.7px;color:#707070;letter-spacing:-0.3px;">$285</div>
<div class="t" style="left:1928.38px;top:354px;font-size:14.7px;color:#707070;letter-spacing:-0.3px;">$855</div>
<div class="abs" style="left:1347px;top:373px;width:621px;height:24.4px;background:#f6f6f6"></div>
<div class="t" style="left:1355.14px;top:378px;font-size:14.7px;color:#707070;letter-spacing:-0.17px;">Quad</div>
<div class="t" style="left:1657.1px;top:378px;font-size:14.7px;color:#707070;letter-spacing:-0.3px;">1</div>
<div class="t" style="left:1780.71px;top:378px;font-size:14.7px;color:#707070;letter-spacing:-0.3px;">$300</div>
<div class="t" style="left:1928.31px;top:378px;font-size:14.7px;color:#707070;letter-spacing:-0.3px;">$300</div>
<div class="t" style="left:1355.12px;top:403px;font-size:14.7px;color:#707070;letter-spacing:-0.53px;transform:scaleX(0.9317);transform-origin:0 0;">GFI</div>
<div class="t" style="left:1657.73px;top:403px;font-size:14.7px;color:#707070;letter-spacing:-0.3px;">3</div>
<div class="t" style="left:1780.78px;top:403px;font-size:14.7px;color:#707070;letter-spacing:-0.3px;">$315</div>
<div class="t" style="left:1928.38px;top:403px;font-size:14.7px;color:#707070;letter-spacing:-0.3px;">$945</div>
<div class="abs" style="left:1347px;top:422px;width:621px;height:24.4px;background:#f6f6f6"></div>
<div class="t" style="left:1354.62px;top:427px;font-size:14.7px;color:#707070;letter-spacing:0.01px;">Dedicated</div>
<div class="t" style="left:1657.51px;top:427px;font-size:14.7px;color:#707070;letter-spacing:-0.3px;">4</div>
<div class="t" style="left:1780.71px;top:427px;font-size:14.7px;color:#707070;letter-spacing:-0.3px;">$640</div>
<div class="t" style="left:1916.63px;top:427px;font-size:14.7px;color:#707070;letter-spacing:-0.3px;">$2,560</div>
<div class="t" style="left:1354.62px;top:452px;font-size:14.7px;color:#707070;letter-spacing:-0.28px;">Data</div>
<div class="t" style="left:1657.88px;top:452px;font-size:14.7px;color:#707070;letter-spacing:-0.3px;">2</div>
<div class="t" style="left:1780.78px;top:452px;font-size:14.7px;color:#707070;letter-spacing:-0.3px;">$225</div>
<div class="t" style="left:1928.31px;top:452px;font-size:14.7px;color:#707070;letter-spacing:-0.3px;">$450</div>
<div class="abs" style="left:1347px;top:471px;width:621px;height:24.4px;background:#f6f6f6"></div>
<div class="t" style="left:1355.14px;top:476px;font-size:14.7px;color:#707070;letter-spacing:-0.4px;">Switches</div>
<div class="t" style="left:1657.1px;top:476px;font-size:14.7px;color:#707070;letter-spacing:-0.3px;">1</div>
<div class="t" style="left:1780.78px;top:476px;font-size:14.7px;color:#707070;letter-spacing:-0.3px;">$225</div>
<div class="t" style="left:1928.38px;top:476px;font-size:14.7px;color:#707070;letter-spacing:-0.3px;">$225</div>
<div class="t" style="left:1355.14px;top:501px;font-size:14.7px;color:#707070;letter-spacing:-0.12px;">Sprinkler</div>
<div class="t" style="left:1657.51px;top:501px;font-size:14.7px;color:#707070;letter-spacing:-0.3px;">4</div>
<div class="t" style="left:1780.71px;top:501px;font-size:14.7px;color:#707070;letter-spacing:-0.3px;">$300</div>
<div class="t" style="left:1916.63px;top:501px;font-size:14.7px;color:#707070;letter-spacing:-0.3px;">$1,200</div>
<div class="abs" style="left:1347px;top:520px;width:621px;height:24.4px;background:#f6f6f6"></div>
<div class="t" style="left:1355.07px;top:525px;font-size:14.7px;color:#707070;letter-spacing:-0.5px;">Core</div>
<div class="t" style="left:1657.66px;top:525px;font-size:14.7px;color:#707070;letter-spacing:-0.3px;">0</div>
<div class="t" style="left:1769.03px;top:525px;font-size:14.7px;color:#707070;letter-spacing:-0.3px;">$3,060</div>
<div class="t" style="left:1944.1px;top:525px;font-size:14.7px;color:#707070;letter-spacing:-0.3px;">$0</div>
<div class="t" style="left:1354.68px;top:550px;font-size:14.7px;color:#707070;letter-spacing:-0.53px;transform:scaleX(0.9533);transform-origin:0 0;">LS-HS</div>
<div class="t" style="left:1657.1px;top:550px;font-size:14.7px;color:#707070;letter-spacing:-0.3px;">1</div>
<div class="t" style="left:1780.71px;top:550px;font-size:14.7px;color:#707070;letter-spacing:-0.3px;">$850</div>
<div class="t" style="left:1928.31px;top:550px;font-size:14.7px;color:#707070;letter-spacing:-0.3px;">$850</div>
<div class="abs" style="left:1347px;top:569px;width:621px;height:24.4px;background:#f6f6f6"></div>
<div class="t" style="left:1354.62px;top:574px;font-size:14.7px;color:#707070;letter-spacing:-0.39px;">HVAC Zone</div>
<div class="t" style="left:1657.1px;top:574px;font-size:14.7px;color:#707070;letter-spacing:-0.3px;">1</div>
<div class="t" style="left:1769.03px;top:574px;font-size:14.7px;color:#707070;letter-spacing:-0.3px;">$5,500</div>
<div class="t" style="left:1916.63px;top:574px;font-size:14.7px;color:#707070;letter-spacing:-0.3px;">$5,500</div>
<div class="abs" style="left:1424px;top:371px;width:15px;height:27px;background:#fdfdfd"></div>
<div class="abs" style="left:1424px;top:398px;width:15px;height:9px;background:#e0e0e0"></div>
<div class="abs" style="left:1138px;top:610px;width:830px;height:448px;overflow:hidden">
<div class="t" style="left:9.65px;top:10px;font-size:14.6px;color:#333;letter-spacing:0.74px;font-weight:bold;">Item</div>
<div class="t" style="left:690.42px;top:10px;font-size:14.6px;color:#333;letter-spacing:-0.66px;transform:scaleX(0.9862);transform-origin:0 0;font-weight:bold;">Cost</div>
<div class="t" style="left:792.75px;top:10px;font-size:14.6px;color:#333;letter-spacing:-0.3px;font-weight:bold;">Ext</div>
<div class="abs" style="left:0;top:31.5px;width:824.5px;height:1.5px;background:#858585"></div>
<div class="t" style="left:9.65px;top:46px;font-size:14.6px;color:#636363;letter-spacing:-0.07px;font-weight:bold;">Flooring (800 USF)</div>
<div class="t" style="left:9.43px;top:63px;font-size:14.6px;color:#707070;letter-spacing:-0.02px;">LVT material only allowance of $10.00 / square foot.</div>
<div class="t" style="left:674.86px;top:54px;font-size:14.6px;color:#636363;letter-spacing:0.25px;font-weight:bold;">$10.22</div>
<div class="t" style="left:769.18px;top:54px;font-size:14.6px;color:#636363;letter-spacing:0.25px;font-weight:bold;">$8,176</div>
<div class="abs" style="left:0;top:88.75px;width:824.5px;height:1px;background:#e1e1e1"></div>
<div class="t" style="left:10.6px;top:103px;font-size:14.6px;color:#636363;letter-spacing:0.18px;font-weight:bold;">Walls (60 ft)</div>
<div class="t" style="left:10.53px;top:120px;font-size:14.6px;color:#707070;letter-spacing:-0.06px;">VWC ($9/yard MOA) one wall, primer and 2 coats BM on other walls.</div>
<div class="t" style="left:687.33px;top:111px;font-size:14.6px;color:#636363;letter-spacing:0.25px;font-weight:bold;">$165</div>
<div class="t" style="left:769.26px;top:111px;font-size:14.6px;color:#636363;letter-spacing:0.25px;font-weight:bold;">$9,900</div>
<div class="abs" style="left:0;top:145.8px;width:824.5px;height:1px;background:#e1e1e1"></div>
<div class="t" style="left:9.65px;top:160px;font-size:14.6px;color:#636363;letter-spacing:0.06px;font-weight:bold;">Lighting (8 ea)</div>
<div class="t" style="left:9.43px;top:177px;font-size:14.6px;color:#707070;letter-spacing:-0.15px;">Furnish and install 3.5" downlights, Focal Point FLC3D / LC3, or equivalent.</div>
<div class="t" style="left:687.55px;top:168px;font-size:14.6px;color:#636363;letter-spacing:0.25px;font-weight:bold;">$780</div>
<div class="t" style="left:769.26px;top:168px;font-size:14.6px;color:#636363;letter-spacing:0.25px;font-weight:bold;">$6,240</div>
<div class="abs" style="left:0;top:202.85px;width:824.5px;height:1px;background:#e1e1e1"></div>
<div class="t" style="left:10.02px;top:217px;font-size:14.6px;color:#636363;letter-spacing:-0.15px;font-weight:bold;">Ceiling (800 USF)</div>
<div class="t" style="left:9.43px;top:234px;font-size:14.6px;color:#707070;letter-spacing:-0.05px;">Painted drywall, 5/8" on metal studs, secured above.</div>
<div class="t" style="left:683.07px;top:225px;font-size:14.6px;color:#636363;letter-spacing:0.25px;font-weight:bold;">$15.5</div>
<div class="t" style="left:760.9px;top:225px;font-size:14.6px;color:#636363;letter-spacing:0.25px;font-weight:bold;">$12,400</div>
<div class="abs" style="left:0;top:259.9px;width:824.5px;height:1px;background:#e1e1e1"></div>
<div class="t" style="left:9.65px;top:274px;font-size:14.6px;color:#636363;letter-spacing:0.27px;font-weight:bold;">Millwork (20 ea)</div>
<div class="t" style="left:9.72px;top:291px;font-size:14.6px;color:#707070;letter-spacing:-0.13px;">(20) LF of b/u cabinets, solid surface counter and backsplash ($8.00 sf MOA).</div>
<div class="t" style="left:687.33px;top:282px;font-size:14.6px;color:#636363;letter-spacing:0.25px;font-weight:bold;">$565</div>
<div class="t" style="left:761.71px;top:282px;font-size:14.6px;color:#636363;letter-spacing:0.25px;font-weight:bold;">$11,300</div>
<div class="abs" style="left:0;top:316.95px;width:824.5px;height:1px;background:#e1e1e1"></div>
<div class="t" style="left:10.23px;top:331px;font-size:14.6px;color:#636363;letter-spacing:-0.15px;font-weight:bold;">Appliances (1 ea)</div>
<div class="t" style="left:10.6px;top:348px;font-size:14.6px;color:#707070;letter-spacing:-0.02px;">Allowance of $11,000 for appliances and installation.</div>
<div class="t" style="left:667.31px;top:339px;font-size:14.6px;color:#636363;letter-spacing:0.25px;font-weight:bold;">$11,000</div>
<div class="t" style="left:761.71px;top:339px;font-size:14.6px;color:#636363;letter-spacing:0.25px;font-weight:bold;">$11,000</div>
<div class="abs" style="left:0;top:374px;width:824.5px;height:1px;background:#e1e1e1"></div>
<div class="t" style="left:9.65px;top:388px;font-size:14.6px;color:#636363;letter-spacing:0.05px;font-weight:bold;">Pendant R3 (5200 ea)</div>
<div class="t" style="left:10.6px;top:405px;font-size:14.6px;color:#707070;">Allow $5200 for pendant or linear fixture(s) over break room table(s).</div>
<div class="t" style="left:704.11px;top:397px;font-size:14.6px;color:#636363;letter-spacing:0.25px;font-weight:bold;">$1</div>
<div class="t" style="left:769.26px;top:397px;font-size:14.6px;color:#636363;letter-spacing:0.25px;font-weight:bold;">$5,200</div>
<div class="abs" style="left:0;top:431.05px;width:824.5px;height:1px;background:#e1e1e1"></div>
<div class="t" style="left:9.65px;top:445px;font-size:14.6px;color:#636363;letter-spacing:0.17px;font-weight:bold;">Plumbing (1 ea)</div>
<div class="t" style="left:9.94px;top:462px;font-size:14.6px;color:#707070;letter-spacing:-0.12px;">Sink, faucet and disposal.</div>
<div class="t" style="left:674.86px;top:454px;font-size:14.6px;color:#636363;letter-spacing:0.25px;font-weight:bold;">$4,500</div>
<div class="t" style="left:769.26px;top:454px;font-size:14.6px;color:#636363;letter-spacing:0.25px;font-weight:bold;">$4,500</div>
<div class="abs" style="left:0;top:488.1px;width:824.5px;height:1px;background:#e1e1e1"></div>
<div class="abs" style="left:824.5px;top:0;width:5.5px;height:448px;background:#f1f0f0"></div>
<div class="abs" style="left:824.5px;top:0;width:5.5px;height:331px;background:#cdcdcd;border-radius:3px"></div>
</div>
<div class="abs" style="left:1138px;top:1057.1px;width:830px;height:1.2px;background:#999"></div>
<div class="t" style="left:1669.56px;top:1069px;font-size:14.6px;color:#3a3a3a;letter-spacing:-0.02px;font-weight:bold;">Single room construction total</div>
<div class="t" style="left:1897.24px;top:1068px;font-size:16.5px;color:#111;letter-spacing:-0.59px;transform:scaleX(0.9727);transform-origin:0 0;">$107,701</div>
</body></html>
